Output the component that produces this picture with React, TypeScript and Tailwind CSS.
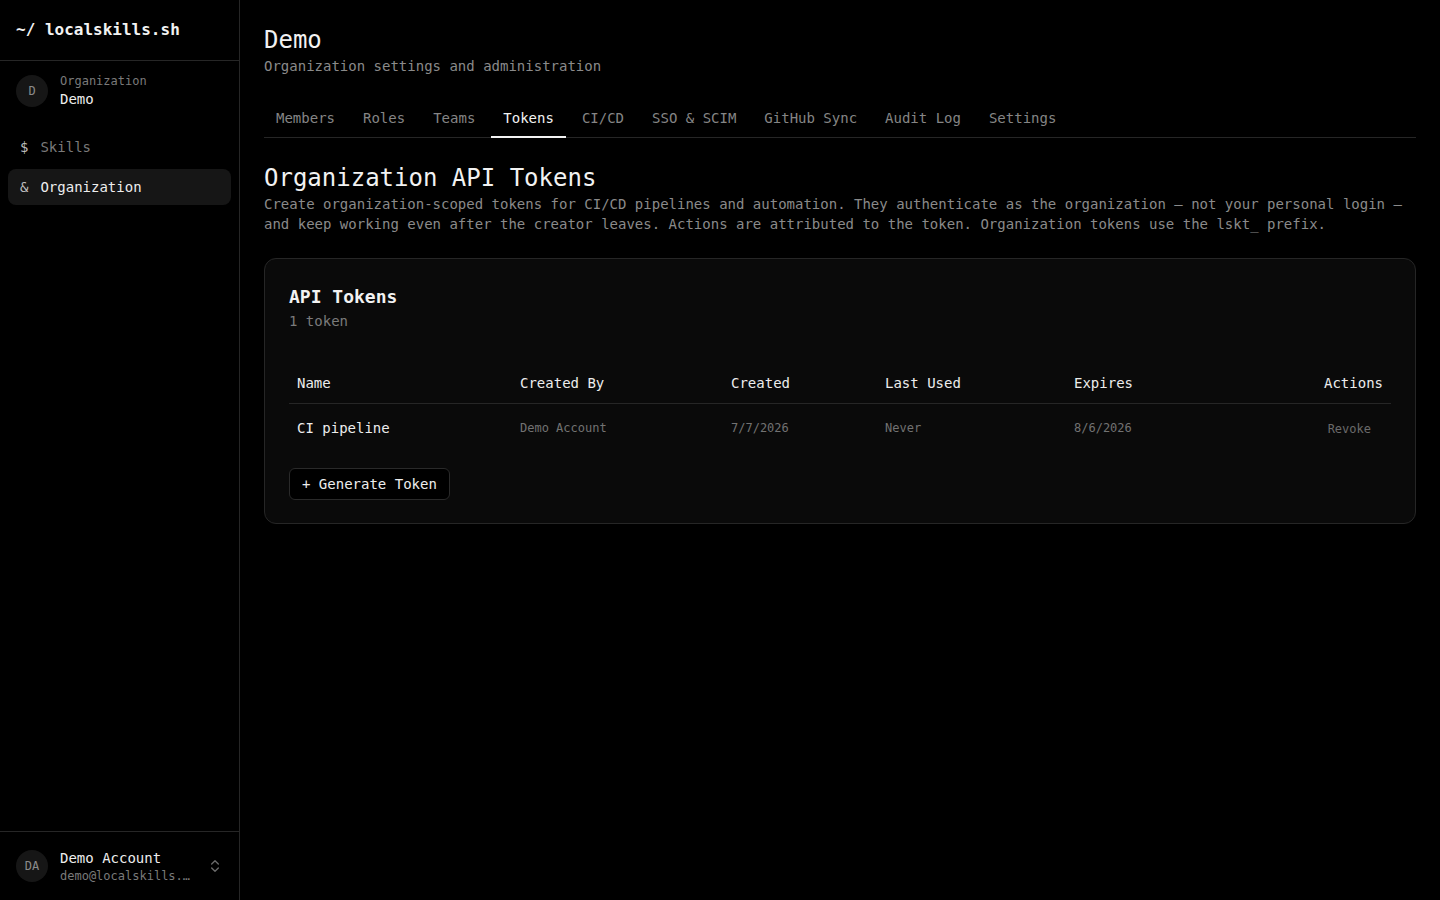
import { ChevronsUpDown } from 'lucide-react';

const TABS = ['Members', 'Roles', 'Teams', 'Tokens', 'CI/CD', 'SSO & SCIM', 'GitHub Sync', 'Audit Log', 'Settings'];

interface Token {
  name: string;
  createdBy: string;
  created: string;
  lastUsed: string;
  expires: string;
}

const TOKENS: Token[] = [
  { name: 'CI pipeline', createdBy: 'Demo Account', created: '7/7/2026', lastUsed: 'Never', expires: '8/6/2026' },
];

function Sidebar() {
  return (
    <aside className="flex h-screen w-[240px] shrink-0 flex-col border-r border-[#262626] bg-black">
      <div className="flex h-[61px] items-center border-b border-[#262626] px-4">
        <span className="text-base font-semibold text-[#f2f2f2]">~/ localskills.sh</span>
      </div>

      <div className="flex items-center gap-3 px-4 pt-[12px]">
        <div className="flex h-8 w-8 items-center justify-center rounded-full bg-[#161616] text-xs text-[#8a8a8a]">D</div>
        <div className="flex flex-col">
          <span className="text-xs leading-4 text-[#7a7a7a]">Organization</span>
          <span className="text-sm leading-5 font-medium text-[#ededed]">Demo</span>
        </div>
      </div>

      <nav className="mt-[20px] flex flex-col gap-1 px-2">
        <div className="flex h-9 items-center gap-3 rounded-lg px-3 text-sm">
          <span className="text-[#bdbdbd]">$</span>
          <span className="text-[#7a7a7a]">Skills</span>
        </div>
        <div className="flex h-9 items-center gap-3 rounded-lg bg-[#161616] px-3 text-sm">
          <span className="text-[#bdbdbd]">&amp;</span>
          <span className="font-medium text-[#ededed]">Organization</span>
        </div>
      </nav>

      <div className="mt-auto flex h-[69px] items-center gap-3 border-t border-[#262626] px-4">
        <div className="flex h-8 w-8 shrink-0 items-center justify-center rounded-full bg-[#161616] text-xs text-[#8a8a8a]">DA</div>
        <div className="flex min-w-0 flex-1 flex-col">
          <span className="text-sm leading-5 font-medium text-[#ededed]">Demo Account</span>
          <span className="truncate text-xs leading-4 text-[#7a7a7a]">demo@localskills.sh</span>
        </div>
        <ChevronsUpDown className="h-4 w-4 shrink-0 text-[#6a6a6a]" />
      </div>
    </aside>
  );
}

export default function App() {
  return (
    <div
      className="flex h-screen w-full overflow-hidden bg-black text-[#ededed]"
      style={{ fontFamily: '"DejaVu Sans Mono", "Liberation Mono", monospace' }}
    >
      <Sidebar />

      <main className="flex-1 px-6 pt-6">
        <h1 className="text-2xl leading-8 font-normal text-[#f2f2f2]">Demo</h1>
        <p className="text-sm leading-5 text-[#8a8a8a]">Organization settings and administration</p>

        <div className="mt-6 flex gap-1 border-b border-[#262626]">
          {TABS.map((t) => (
            <div
              key={t}
              className={`-mb-px border-b-2 px-3 py-2 text-sm leading-5 ${
                t === 'Tokens' ? 'border-[#f2f2f2] font-medium text-[#f2f2f2]' : 'border-transparent text-[#858585]'
              }`}
            >
              {t}
            </div>
          ))}
        </div>

        <h2 className="mt-6 text-2xl leading-8 font-normal text-[#f2f2f2]">Organization API Tokens</h2>
        <p className="text-sm leading-5 text-[#8a8a8a]">
          Create organization-scoped tokens for CI/CD pipelines and automation. They authenticate as the organization — not your personal login — and keep working even after the creator leaves. Actions are attributed to the token. Organization tokens use the lskt_ prefix.
        </p>

        <section className="mt-6 rounded-xl border border-[#262626] bg-[#0a0a0a] px-6 py-6">
          <h3 className="text-lg leading-7 font-semibold text-[#f2f2f2]">API Tokens</h3>
          <p className="text-sm leading-5 text-[#7a7a7a]">1 token</p>

          <table className="mt-8 w-full border-collapse text-left">
            <thead>
              <tr className="h-10 border-b border-[#262626] text-sm">
                <th className="w-[223px] px-2 font-medium text-[#ededed]">Name</th>
                <th className="w-[211px] px-2 font-medium text-[#ededed]">Created By</th>
                <th className="w-[154px] px-2 font-medium text-[#ededed]">Created</th>
                <th className="w-[189px] px-2 font-medium text-[#ededed]">Last Used</th>
                <th className="w-[162px] px-2 font-medium text-[#ededed]">Expires</th>
                <th className="px-2 text-right font-medium text-[#ededed]">Actions</th>
              </tr>
            </thead>
            <tbody>
              {TOKENS.map((tk) => (
                <tr key={tk.name} className="h-12">
                  <td className="px-2 pt-px text-sm font-medium text-[#ededed]">{tk.name}</td>
                  <td className="px-2 pt-px text-xs text-[#727272]">{tk.createdBy}</td>
                  <td className="px-2 pt-px text-xs text-[#727272]">{tk.created}</td>
                  <td className="px-2 pt-px text-xs text-[#727272]">{tk.lastUsed}</td>
                  <td className="px-2 pt-px text-xs text-[#727272]">{tk.expires}</td>
                  <td className="px-2 pt-px text-right">
                    <button className="px-3 text-xs text-[#6a6a6a]">Revoke</button>
                  </td>
                </tr>
              ))}
            </tbody>
          </table>

          <button className="mt-4 h-8 translate-y-px rounded-md border border-[#2a2a2a] bg-black px-3 text-sm font-medium text-[#ededed]">
            + Generate Token
          </button>
        </section>
      </main>
    </div>
  );
}
